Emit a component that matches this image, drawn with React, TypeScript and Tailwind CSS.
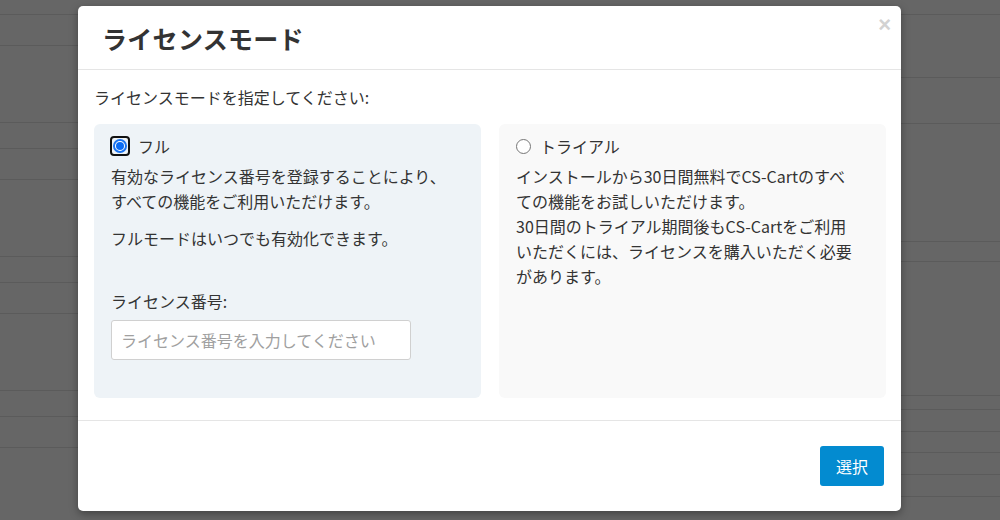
import React from 'react'

const leftRows = [15, 31, 77, 26, 31, 77, 26, 31, 77, 26, 31, 80]
const rightRows = [15, 63, 46, 118, 20, 134, 14, 22, 21, 22, 22, 30]

const BackdropTable = ({ rows }: { rows: number[] }) => (
  <div className="flex flex-col">
    {rows.map((h, i) => (
      <div key={i} className="border-b border-[#5b5b5b]" style={{ height: h }} />
    ))}
  </div>
)

const CheckedRadio = () => (
  <span className="flex h-[20px] w-[20px] items-center justify-center rounded-[4px] border-2 border-[#111]">
    <span className="flex h-[14px] w-[14px] items-center justify-center rounded-full border-2 border-[#1a73f0] bg-white">
      <span className="h-[8px] w-[8px] rounded-full bg-[#0b6cf5]" />
    </span>
  </span>
)

const EmptyRadio = () => (
  <span className="h-[15px] w-[15px] rounded-full border border-[#767676] bg-white" />
)

export default function App() {
  return (
    <div className="relative h-[520px] w-[1000px] overflow-hidden bg-[#666666] font-['Noto_Sans_CJK_JP',sans-serif] text-[#333]">
      {/* dimmed page behind the dialog */}
      <div className="flex">
        <div className="w-[78px]">
          <BackdropTable rows={leftRows} />
        </div>
        <div className="flex-1" />
        <div className="w-[99px]">
          <BackdropTable rows={rightRows} />
        </div>
      </div>

      <div className="absolute left-[78px] top-[6px] w-[823px] rounded-[5px] bg-white shadow-[0_3px_8px_rgba(0,0,0,0.35)]">
        <div className="relative flex h-[64px] items-center border-b border-[#e5e5e5] px-[24px]">
          <h3 className="text-[25px] font-bold leading-[30px] tracking-[0.3px] text-[#333]">
            ライセンスモード
          </h3>
          <button className="absolute right-[10px] top-[7px] font-['Liberation_Sans',sans-serif] text-[22px] font-bold leading-[24px] text-[#d2d2d2]">
            ×
          </button>
        </div>

        <div className="pb-[22px] pl-[16px] pr-[15px] pt-[15px]">
          <p className="text-[16px] leading-[25px]">ライセンスモードを指定してください:</p>

          <div className="mt-[14px] grid grid-cols-2 gap-[18px]">
            <div className="h-[274px] rounded-[6px] bg-[#eef3f7] px-[17px] pt-[12px]">
              <label className="-ml-px flex h-[20px] items-center gap-[8px] text-[16px]">
                <CheckedRadio />
                <span className="leading-[20px]">フル</span>
              </label>
              <p className="mt-[8px] whitespace-nowrap text-[16px] leading-[25px]">
                有効なライセンス番号を登録することにより、
                <br />
                すべての機能をご利用いただけます。
              </p>
              <p className="mt-[12px] text-[16px] leading-[25px]">フルモードはいつでも有効化できます。</p>
              <p className="mt-[38px] text-[16px] leading-[25px]">ライセンス番号:</p>
              <input
                type="text"
                placeholder="ライセンス番号を入力してください"
                className="mt-[6px] h-[40px] w-[300px] rounded-[3px] border border-[#d0d0d0] bg-white px-[9px] text-[16px] outline-none placeholder:text-[#a0a0a0]"
              />
            </div>

            <div className="h-[274px] rounded-[6px] bg-[#f9f9f9] px-[17px] pt-[12px]">
              <label className="flex h-[20px] items-center gap-[9px] text-[16px]">
                <EmptyRadio />
                <span className="leading-[20px]">トライアル</span>
              </label>
              <p className="mt-[8px] whitespace-nowrap text-[16px] leading-[25px]">
                インストールから30日間無料でCS-Cartのすべ
                <br />
                ての機能をお試しいただけます。
                <br />
                30日間のトライアル期間後もCS-Cartをご利用
                <br />
                いただくには、ライセンスを購入いただく必要
                <br />
                があります。
              </p>
            </div>
          </div>
        </div>

        <div className="flex justify-end border-t border-[#e5e5e5] px-[17px] py-[25px]">
          <button className="h-[40px] w-[64px] rounded-[3px] bg-[#038bd0] text-[16px] text-white">
            選択
          </button>
        </div>
      </div>
    </div>
  )
}
